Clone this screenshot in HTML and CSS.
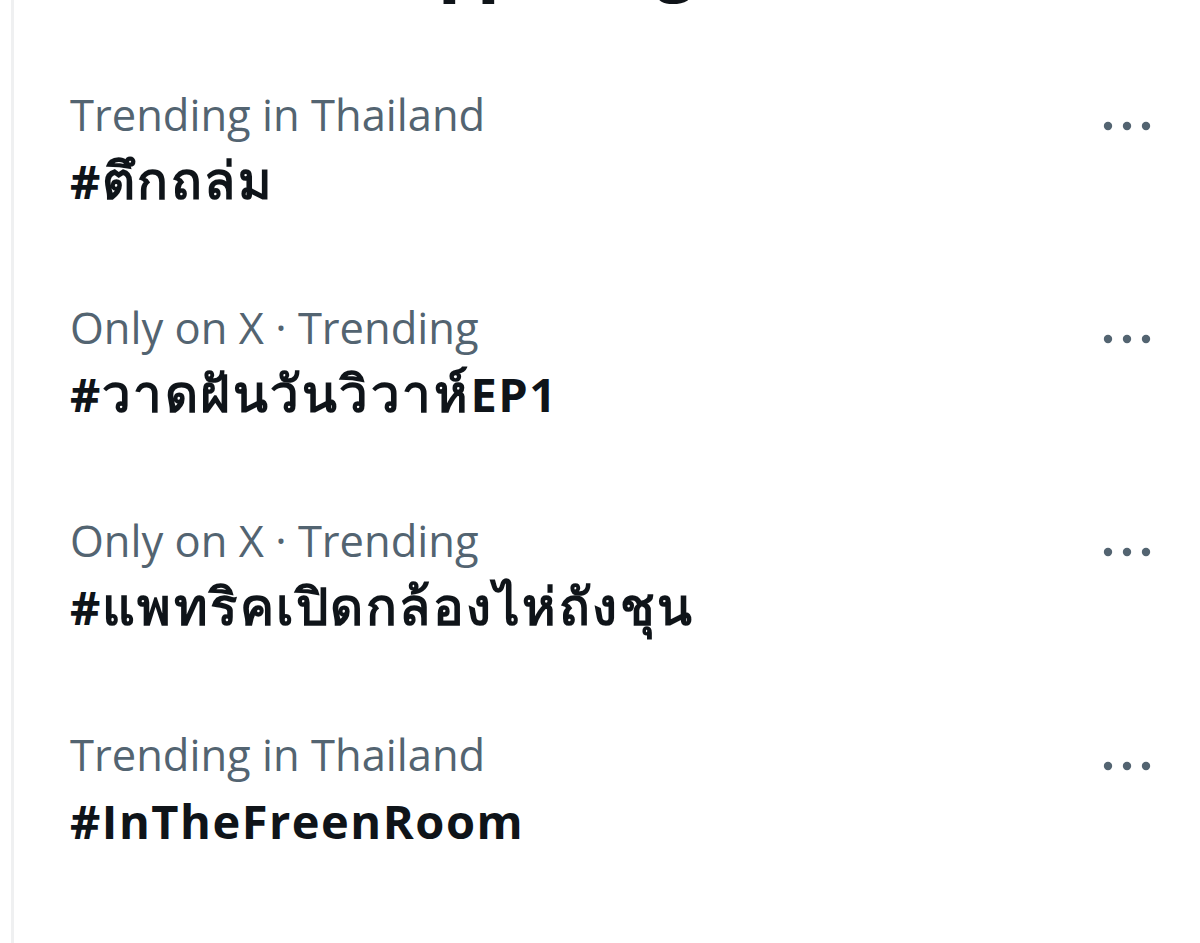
FILE: index.html
```html
<!DOCTYPE html>
<html lang="en">
<head>
    <meta charset="UTF-8">
    <meta name="viewport" content="width=device-width, initial-scale=1.0">
    <title>Trends for you</title>
    <link rel="stylesheet" href="styles.css">
</head>
<body>
    <div class="trends-panel">
        <h2 class="panel-title">What's happening</h2>

        <div class="trend">
            <div class="trend-text">
                <div class="trend-meta">Trending in Thailand</div>
                <div class="trend-name">#<span class="thai">ตึกถล่ม</span></div>
            </div>
            <svg class="more" viewBox="0 0 60 60"><circle cx="11" cy="30" r="4.2"/><circle cx="30" cy="30" r="4.2"/><circle cx="49" cy="30" r="4.2"/></svg>
        </div>

        <div class="trend">
            <div class="trend-text">
                <div class="trend-meta">Only on X · Trending</div>
                <div class="trend-name">#<span class="thai">วาดฝันวันวิวาห์</span>EP1</div>
            </div>
            <svg class="more" viewBox="0 0 60 60"><circle cx="11" cy="30" r="4.2"/><circle cx="30" cy="30" r="4.2"/><circle cx="49" cy="30" r="4.2"/></svg>
        </div>

        <div class="trend">
            <div class="trend-text">
                <div class="trend-meta">Only on X · Trending</div>
                <div class="trend-name">#<span class="thai">แพทริคเปิดกล้องไห่ถังชุน</span></div>
            </div>
            <svg class="more" viewBox="0 0 60 60"><circle cx="11" cy="30" r="4.2"/><circle cx="30" cy="30" r="4.2"/><circle cx="49" cy="30" r="4.2"/></svg>
        </div>

        <div class="trend">
            <div class="trend-text">
                <div class="trend-meta">Trending in Thailand</div>
                <div class="trend-name">#InTheFreenRoom</div>
            </div>
            <svg class="more" viewBox="0 0 60 60"><circle cx="11" cy="30" r="4.2"/><circle cx="30" cy="30" r="4.2"/><circle cx="49" cy="30" r="4.2"/></svg>
        </div>
    </div>
</body>
</html>
```

FILE: styles.css
```css
html, body {
    margin: 0;
    padding: 0;
    background: #ffffff;
    height: 100%;
    overflow: hidden;
}
body {
    font-family: "Open Sans", "Noto Sans", "DejaVu Sans", sans-serif;
    color: #0f1419;
}
.trends-panel {
    margin-left: 11px;
    border-left: 3px solid #eff0f1;
    min-height: calc(100% + 100px);
    box-sizing: border-box;
}
.panel-title {
    margin: -73px 0 34px 0;
    padding-left: 111px;
    font-size: 61px;
    line-height: 80px;
    font-weight: 800;
}
.trend {
    display: flex;
    align-items: flex-start;
    padding: 46.67px 43px 40.67px 56px;
}
.trend-text {
    flex: 1;
}
.trend-meta {
    font-size: 43.5px;
    line-height: 54px;
    color: #536471;
}
.trend-name {
    margin-top: 6px;
    height: 66px;
    font-size: 47px;
    line-height: 66px;
    font-weight: 700;
    letter-spacing: 1.5px;
}
.thai {
    font-size: 51px;
    line-height: 1;
    letter-spacing: 2.5px;
}
.more {
    width: 60px;
    height: 60px;
    margin-top: 8px;
    fill: #536471;
}
```
